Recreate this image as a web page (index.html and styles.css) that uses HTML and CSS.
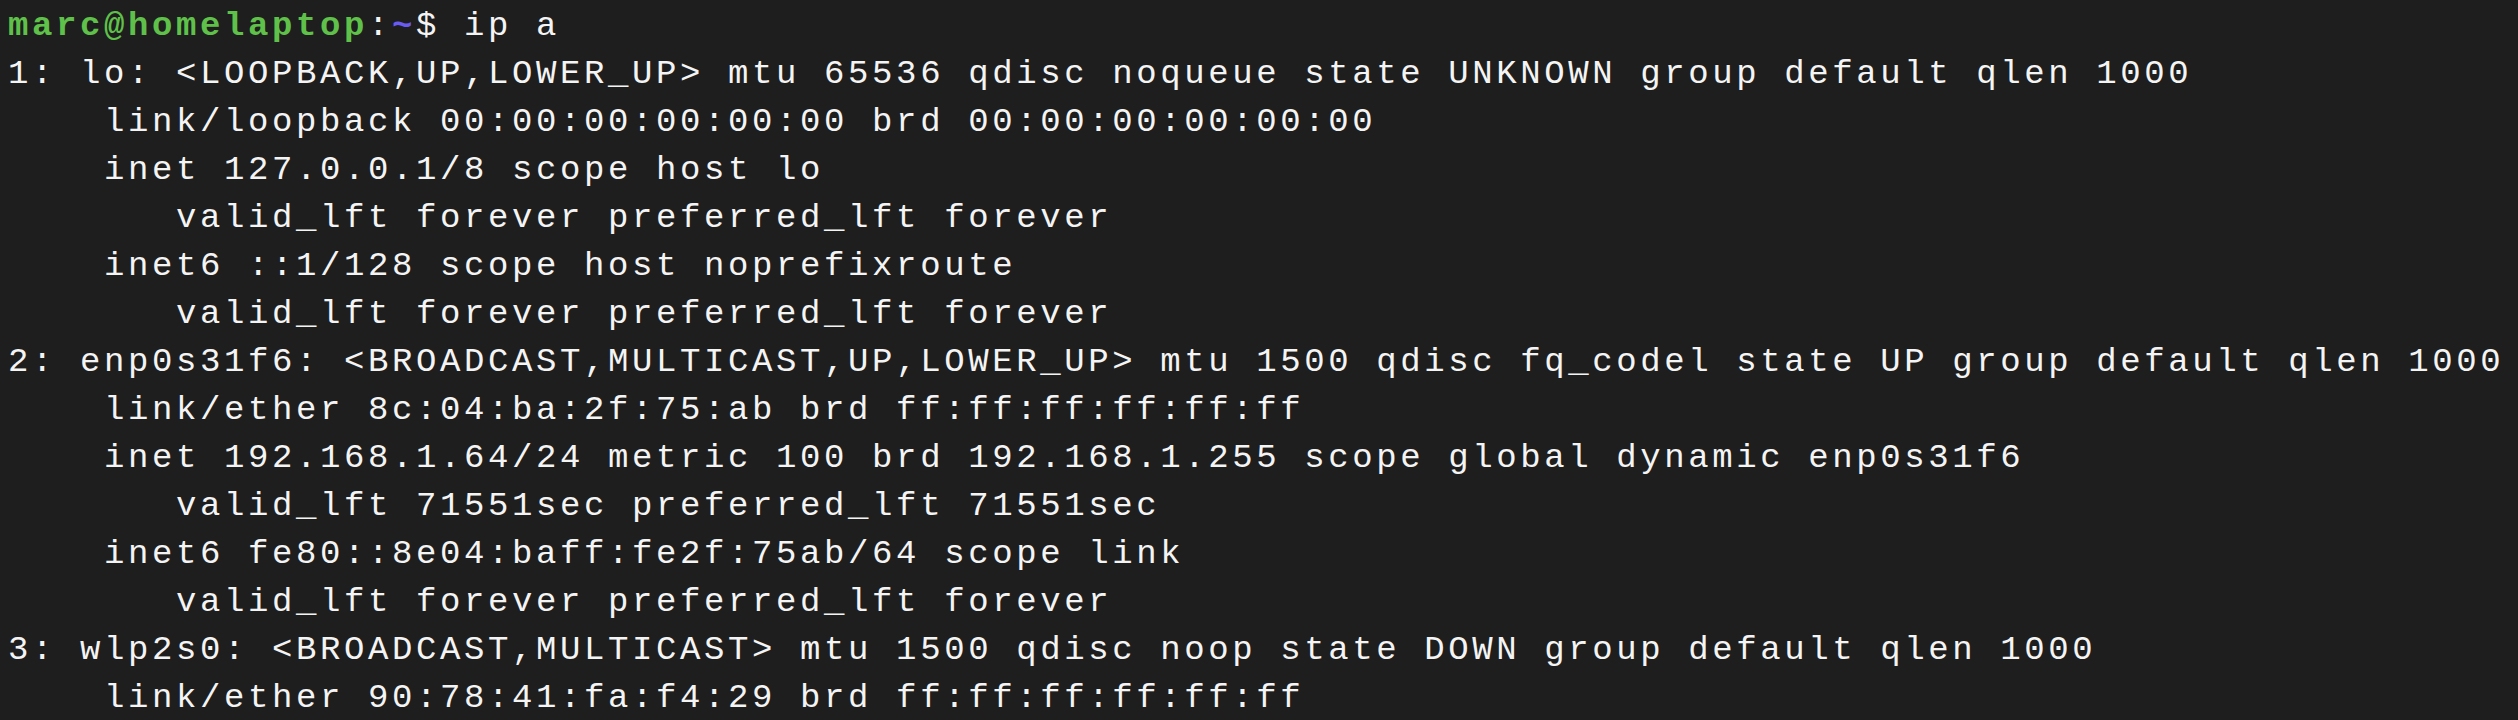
FILE: index.html
```html
<!DOCTYPE html>
<html>
<head>
<meta charset="utf-8">
<link rel="stylesheet" href="styles.css">
</head>
<body>
<pre class="term"><span class="user">marc@homelaptop</span>:<span class="dir">~</span>$ ip a
1: lo: &lt;LOOPBACK,UP,LOWER_UP&gt; mtu 65536 qdisc noqueue state UNKNOWN group default qlen 1000
    link/loopback 00:00:00:00:00:00 brd 00:00:00:00:00:00
    inet 127.0.0.1/8 scope host lo
       valid_lft forever preferred_lft forever
    inet6 ::1/128 scope host noprefixroute
       valid_lft forever preferred_lft forever
2: enp0s31f6: &lt;BROADCAST,MULTICAST,UP,LOWER_UP&gt; mtu 1500 qdisc fq_codel state UP group default qlen 1000
    link/ether 8c:04:ba:2f:75:ab brd ff:ff:ff:ff:ff:ff
    inet 192.168.1.64/24 metric 100 brd 192.168.1.255 scope global dynamic enp0s31f6
       valid_lft 71551sec preferred_lft 71551sec
    inet6 fe80::8e04:baff:fe2f:75ab/64 scope link
       valid_lft forever preferred_lft forever
3: wlp2s0: &lt;BROADCAST,MULTICAST&gt; mtu 1500 qdisc noop state DOWN group default qlen 1000
    link/ether 90:78:41:fa:f4:29 brd ff:ff:ff:ff:ff:ff</pre>
</body>
</html>
```
FILE: styles.css
```css
html, body {
  margin: 0;
  padding: 0;
  background: #1e1e1e;
  height: 720px;
  overflow: hidden;
}
.term {
  margin: 0;
  box-sizing: border-box;
  height: 720px;
  overflow: hidden;
  padding: 2px 0 0 8px;
  font-family: "Liberation Mono", monospace;
  font-size: 34px;
  line-height: 48px;
  letter-spacing: 3.6px;
  color: #f4f4f4;
  white-space: pre;
}
.user {
  color: #5fc14a;
  font-weight: bold;
}
.dir {
  color: #6a5cf2;
  font-weight: bold;
}
```
